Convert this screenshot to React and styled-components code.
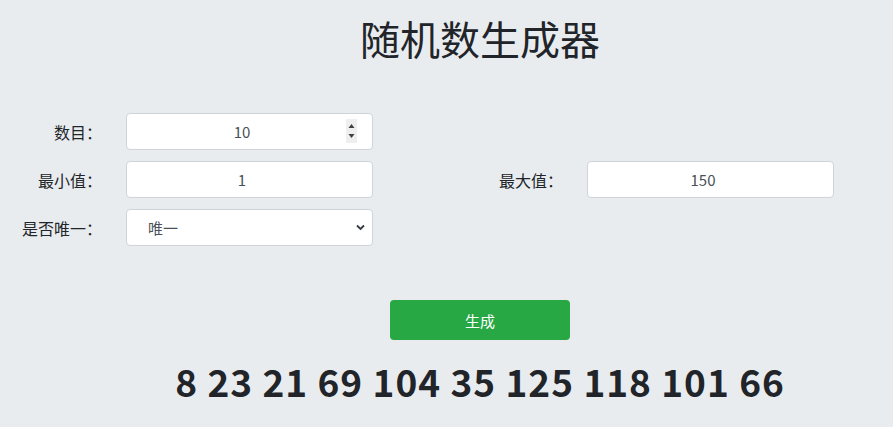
import React from "react";
import styled, { createGlobalStyle } from "styled-components";

const Global = createGlobalStyle`
  html, body { margin: 0; padding: 0; background: #e9ecef; overflow: hidden; }
  body { font-family: "Noto Sans CJK SC", "Noto Sans", sans-serif; color: #212529; }
  * { box-sizing: border-box; }
`;

const Page = styled.div`
  width: 960px;
  display: flex;
  flex-direction: column;
  align-items: center;
`;

const Title = styled.h1`
  margin: 14px 0 0;
  font-size: 40px;
  font-weight: 400;
  line-height: 48px;
  color: #212529;
`;

const Form = styled.div`
  align-self: stretch;
  margin-top: 51px;
  display: grid;
  grid-template-columns: 126px 247px 88px 126px 247px;
  grid-auto-rows: 37px;
  row-gap: 11px;
`;

const Label = styled.label`
  display: flex;
  align-items: center;
  justify-content: flex-end;
  padding-right: 24px;
  font-size: 16px;
  color: #212529;
`;

const Spacer = styled.span`
  grid-column: ${(p) => p.$span || "auto"};
`;

const Control = styled.div`
  position: relative;
  height: 37px;
`;

const Field = styled.input`
  width: 100%;
  height: 37px;
  border: 1px solid #ced4da;
  border-radius: 4px;
  background: #fff;
  text-align: center;
  font-family: "Noto Sans CJK SC", "Noto Sans", sans-serif;
  font-size: 15px;
  color: #495057;
  outline: none;
  padding: 0 27px 0 12px;
  appearance: textfield;
  -moz-appearance: textfield;
  &::-webkit-inner-spin-button,
  &::-webkit-outer-spin-button {
    -webkit-appearance: none;
    margin: 0;
  }
`;

const Spinner = styled.svg`
  position: absolute;
  right: 16px;
  top: 6px;
  width: 11px;
  height: 24px;
  pointer-events: none;
`;

const Select = styled.select`
  width: 100%;
  height: 37px;
  border: 1px solid #ced4da;
  border-radius: 4px;
  background: #fff;
  appearance: none;
  padding: 0 28px 0 21px;
  font-family: "Noto Sans CJK SC", "Noto Sans", sans-serif;
  font-size: 15px;
  color: #495057;
  outline: none;
`;

const Chevron = styled.svg`
  position: absolute;
  right: 8px;
  top: 15px;
  width: 9px;
  height: 7px;
  pointer-events: none;
`;

const Button = styled.button`
  margin-top: 54px;
  width: 180px;
  height: 40px;
  border: none;
  border-radius: 4px;
  background: #28a745;
  color: #fff;
  font-family: "Noto Sans CJK SC", "Noto Sans", sans-serif;
  font-size: 15px;
`;

const Result = styled.div`
  margin-top: 17px;
  font-size: 37px;
  font-weight: 700;
  line-height: 48px;
  color: #212529;
  letter-spacing: 1px;
`;

export default function App() {
  const nums = [8, 23, 21, 69, 104, 35, 125, 118, 101, 66];
  return (
    <>
      <Global />
      <Page>
        <Title>随机数生成器</Title>
        <Form>
          <Label>数目：</Label>
          <Control>
            <Field type="number" defaultValue={10} />
            <Spinner viewBox="0 0 11 24">
              <rect x="0" y="0" width="11" height="24" fill="#efefef" />
              <path d="M2.5 9 L5.5 5 L8.5 9 Z" fill="#404040" />
              <path d="M2.5 15 L5.5 19 L8.5 15 Z" fill="#404040" />
            </Spinner>
          </Control>
          <Spacer $span="3 / 6" />
          <Label>最小值：</Label>
          <Field type="number" defaultValue={1} />
          <Spacer />
          <Label>最大值：</Label>
          <Field type="number" defaultValue={150} />
          <Label>是否唯一：</Label>
          <Control>
            <Select defaultValue="1">
              <option value="1">唯一</option>
              <option value="0">不唯一</option>
            </Select>
            <Chevron viewBox="0 0 9 7">
              <path d="M1 1.5 L4.5 5 L8 1.5" fill="none" stroke="#343a40" strokeWidth="1.8" />
            </Chevron>
          </Control>
        </Form>
        <Button>生成</Button>
        <Result>{nums.join(" ")}</Result>
      </Page>
    </>
  );
}
